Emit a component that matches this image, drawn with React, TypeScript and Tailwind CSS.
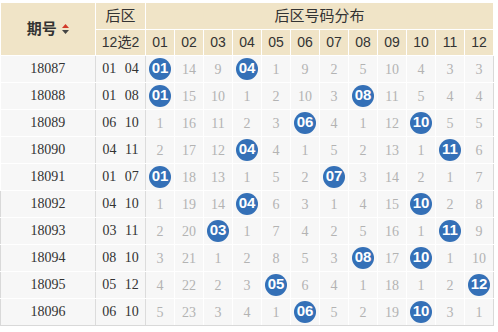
import React from 'react';

const rows = [
  { id: '18087', back: [1, 4], miss: [0, 14, 9, 0, 1, 9, 2, 5, 10, 4, 3, 3] },
  { id: '18088', back: [1, 8], miss: [0, 15, 10, 1, 2, 10, 3, 0, 11, 5, 4, 4] },
  { id: '18089', back: [6, 10], miss: [1, 16, 11, 2, 3, 0, 4, 1, 12, 0, 5, 5] },
  { id: '18090', back: [4, 11], miss: [2, 17, 12, 0, 4, 1, 5, 2, 13, 1, 0, 6] },
  { id: '18091', back: [1, 7], miss: [0, 18, 13, 1, 5, 2, 0, 3, 14, 2, 1, 7] },
  { id: '18092', back: [4, 10], miss: [1, 19, 14, 0, 6, 3, 1, 4, 15, 0, 2, 8] },
  { id: '18093', back: [3, 11], miss: [2, 20, 0, 1, 7, 4, 2, 5, 16, 1, 0, 9] },
  { id: '18094', back: [8, 10], miss: [3, 21, 1, 2, 8, 5, 3, 0, 17, 0, 1, 10] },
  { id: '18095', back: [5, 12], miss: [4, 22, 2, 3, 0, 6, 4, 1, 18, 1, 2, 0] },
  { id: '18096', back: [6, 10], miss: [5, 23, 3, 4, 1, 0, 5, 2, 19, 0, 3, 1] },
];

const pad = (n: number) => String(n).padStart(2, '0');
const nums = Array.from({ length: 12 }, (_, i) => i + 1);

function SortIcon() {
  return (
    <svg width="7" height="10" viewBox="0 0 7 10" className="inline-block ml-[5px] -mt-[2px] align-middle">
      <polygon points="0,4 3.5,0 7,4" fill="#d23a2a" />
      <polygon points="0,6 7,6 3.5,10" fill="#444" />
    </svg>
  );
}

export default function App() {
  return (
    <div className="w-[498px] h-[332px] bg-white pt-[3px] overflow-hidden">
      <table className="border-collapse table-fixed w-[494px] text-center text-[#333] font-['Liberation_Sans','Noto_Sans_CJK_SC',sans-serif]">
        <colgroup>
          <col className="w-[95px]" />
          <col className="w-[50px]" />
          {nums.map((n) => (
            <col key={n} className="w-[29px]" />
          ))}
        </colgroup>
        <thead>
          <tr className="h-[26px] bg-[#f0e4c7]">
            <th rowSpan={2} className="border border-white border-l-0 border-t-0 text-[15px] font-bold">
              期号
              <SortIcon />
            </th>
            <th className="border border-white border-t-0 text-[15px] font-normal">后区</th>
            <th colSpan={12} className="border border-white border-t-0 text-[15px] font-normal">
              后区号码分布
            </th>
          </tr>
          <tr className="h-[26px] bg-[#f0e4c7]">
            <th className="border border-white text-[14px] font-normal">12选2</th>
            {nums.map((n) => (
              <th key={n} className="border border-white text-[14px] font-normal">
                {pad(n)}
              </th>
            ))}
          </tr>
        </thead>
        <tbody>
          {rows.map((row, r) => {
            const second = r >= 5;
            const top = r === 5 ? 'border-t-[#d9d9d9]' : '';
            const bottom = r === 9 ? 'border-b-[#d9d9d9]' : '';
            return (
              <tr key={row.id} className="h-[27px] bg-[#f7f7f7]">
                <td
                  className={`border border-white border-r-[#dcdcdc] ${second ? 'border-l-[#d9d9d9]' : 'border-l-0'} ${top} ${bottom} text-[14px] font-['Liberation_Serif',serif]`}
                >
                  {row.id}
                </td>
                <td className={`border border-white border-r-[#dcdcdc] ${top} ${bottom} text-[14px] [word-spacing:5px] font-['Liberation_Serif',serif]`}>
                  {pad(row.back[0])} {pad(row.back[1])}
                </td>
                {row.miss.map((m, i) => {
                  const n = i + 1;
                  const hit = row.back.includes(n);
                  const last = i === 11 ? 'border-r-[#d9d9d9]' : '';
                  return (
                    <td key={n} className={`border border-white ${last} ${top} ${bottom} p-0`}>
                      {hit ? (
                        <span className="mx-auto flex h-[22px] w-[22px] items-center justify-center rounded-full bg-[#3470b7] text-[15px] font-bold text-white">
                          {pad(n)}
                        </span>
                      ) : (
                        <span className="text-[14px] text-[#b3b3b3] font-['Liberation_Serif',serif]">{m}</span>
                      )}
                    </td>
                  );
                })}
              </tr>
            );
          })}
        </tbody>
      </table>
    </div>
  );
}
